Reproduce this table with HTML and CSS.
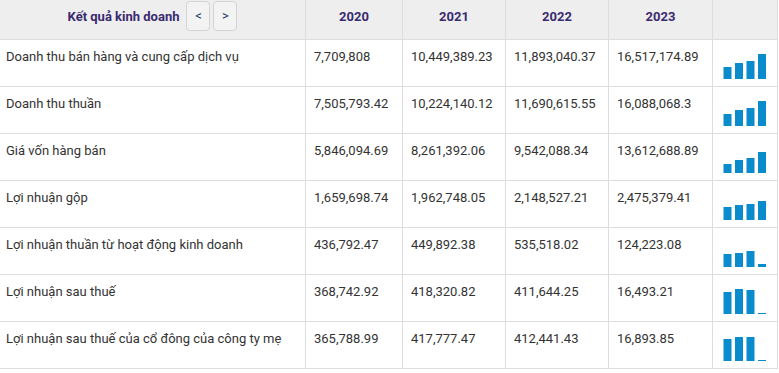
FILE: index.html
```html
<!DOCTYPE html>
<html lang="vi">
<head>
<meta charset="utf-8">
<title>Kết quả kinh doanh</title>
<link rel="stylesheet" href="styles.css">
</head>
<body>
<div class="tbl">
  <div class="row head">
    <div class="c c0"><span class="title">Kết quả kinh doanh</span><button class="nav">&lt;</button><button class="nav">&gt;</button></div>
    <div class="c cy">2020</div>
    <div class="c cy">2021</div>
    <div class="c cy">2022</div>
    <div class="c cy">2023</div>
    <div class="c cs"></div>
  </div>
  <div class="row">
    <div class="c c0">Doanh thu bán hàng và cung cấp dịch vụ</div>
    <div class="c">7,709,808</div>
    <div class="c">10,449,389.23</div>
    <div class="c">11,893,040.37</div>
    <div class="c">16,517,174.89</div>
    <div class="c cs"><svg class="spark" width="44" height="26" viewBox="0 0 44 26"><rect x="0.5" y="14" width="8" height="12"/><rect x="12" y="10" width="8" height="16"/><rect x="23.5" y="8" width="8" height="18"/><rect x="35" y="1" width="8" height="25"/></svg></div>
  </div>
  <div class="row">
    <div class="c c0">Doanh thu thuần</div>
    <div class="c">7,505,793.42</div>
    <div class="c">10,224,140.12</div>
    <div class="c">11,690,615.55</div>
    <div class="c">16,088,068.3</div>
    <div class="c cs"><svg class="spark" width="44" height="26" viewBox="0 0 44 26"><rect x="0.5" y="14" width="8" height="12"/><rect x="12" y="10" width="8" height="16"/><rect x="23.5" y="8" width="8" height="18"/><rect x="35" y="1" width="8" height="25"/></svg></div>
  </div>
  <div class="row">
    <div class="c c0">Giá vốn hàng bán</div>
    <div class="c">5,846,094.69</div>
    <div class="c">8,261,392.06</div>
    <div class="c">9,542,088.34</div>
    <div class="c">13,612,688.89</div>
    <div class="c cs"><svg class="spark" width="44" height="26" viewBox="0 0 44 26"><rect x="0.5" y="17" width="8" height="9"/><rect x="12" y="13" width="8" height="13"/><rect x="23.5" y="11" width="8" height="15"/><rect x="35" y="5" width="8" height="21"/></svg></div>
  </div>
  <div class="row">
    <div class="c c0">Lợi nhuận gộp</div>
    <div class="c">1,659,698.74</div>
    <div class="c">1,962,748.05</div>
    <div class="c">2,148,527.21</div>
    <div class="c">2,475,379.41</div>
    <div class="c cs"><svg class="spark" width="44" height="26" viewBox="0 0 44 26"><rect x="0.5" y="13" width="8" height="13"/><rect x="12" y="11" width="8" height="15"/><rect x="23.5" y="10" width="8" height="16"/><rect x="35" y="7" width="8" height="19"/></svg></div>
  </div>
  <div class="row">
    <div class="c c0">Lợi nhuận thuần từ hoạt động kinh doanh</div>
    <div class="c">436,792.47</div>
    <div class="c">449,892.38</div>
    <div class="c">535,518.02</div>
    <div class="c">124,223.08</div>
    <div class="c cs"><svg class="spark" width="44" height="26" viewBox="0 0 44 26"><rect x="0.5" y="13" width="8" height="13"/><rect x="12" y="12" width="8" height="14"/><rect x="23.5" y="10" width="8" height="16"/><rect x="35" y="23" width="8" height="3"/></svg></div>
  </div>
  <div class="row">
    <div class="c c0">Lợi nhuận sau thuế</div>
    <div class="c">368,742.92</div>
    <div class="c">418,320.82</div>
    <div class="c">411,644.25</div>
    <div class="c">16,493.21</div>
    <div class="c cs"><svg class="spark" width="44" height="26" viewBox="0 0 44 26"><rect x="0.5" y="4" width="8" height="22"/><rect x="12" y="1" width="8" height="25"/><rect x="23.5" y="2" width="8" height="24"/><rect x="35" y="25" width="8" height="1"/></svg></div>
  </div>
  <div class="row">
    <div class="c c0">Lợi nhuận sau thuế của cổ đông của công ty mẹ</div>
    <div class="c">365,788.99</div>
    <div class="c">417,777.47</div>
    <div class="c">412,441.43</div>
    <div class="c">16,893.85</div>
    <div class="c cs"><svg class="spark" width="44" height="26" viewBox="0 0 44 26"><rect x="0.5" y="4" width="8" height="22"/><rect x="12" y="2" width="8" height="24"/><rect x="23.5" y="2" width="8" height="24"/><rect x="35" y="25" width="8" height="1"/></svg></div>
  </div>
</div>
</body>
</html>
```

FILE: styles.css
```css
* { box-sizing: border-box; }
html, body { margin: 0; padding: 0; background: #fff; }
body {
  font-family: Roboto, "Liberation Sans", Arial, sans-serif;
  font-size: 13px;
  color: #333;
}
.tbl { width: 778px; }
.row {
  display: grid;
  grid-template-columns: 306px 97px 103px 103px 104px 65px;
  height: 47px;
}
.row.head { height: 40px; background: #eeeeee; }
.c {
  border-right: 1px solid #dddddd;
  border-bottom: 1px solid #dddddd;
  padding: 9px 8px 0 8px;
  line-height: 15px;
  white-space: nowrap;
}
.row .c0 { padding-left: 6px; }
.head .c {
  padding: 1px 4px 0 4px;
  display: flex;
  align-items: center;
  height: 40px;
  align-self: start;
}
.head .c0 { justify-content: center; padding-left: 4px; padding-bottom: 8px; }
.head .cy { justify-content: center; font-weight: 700; color: #3a2a6e; padding-bottom: 8px; }
.title { font-weight: 700; color: #3a2a6e; margin-right: 4px; }
.nav {
  width: 24px;
  height: 30px;
  margin: 0 0 0 3px;
  padding: 0;
  border: 1px solid #d4d4d4;
  border-radius: 4px;
  background: #f3f3f3;
  color: #1f3566;
  font-family: Roboto, "Liberation Sans", Arial, sans-serif;
  font-size: 13px;
  font-weight: 400;
  line-height: 28px;
}
.cs { padding: 13px 0 0 10px; }
.spark { display: block; }
.spark rect { fill: #0a8bcb; }
```
